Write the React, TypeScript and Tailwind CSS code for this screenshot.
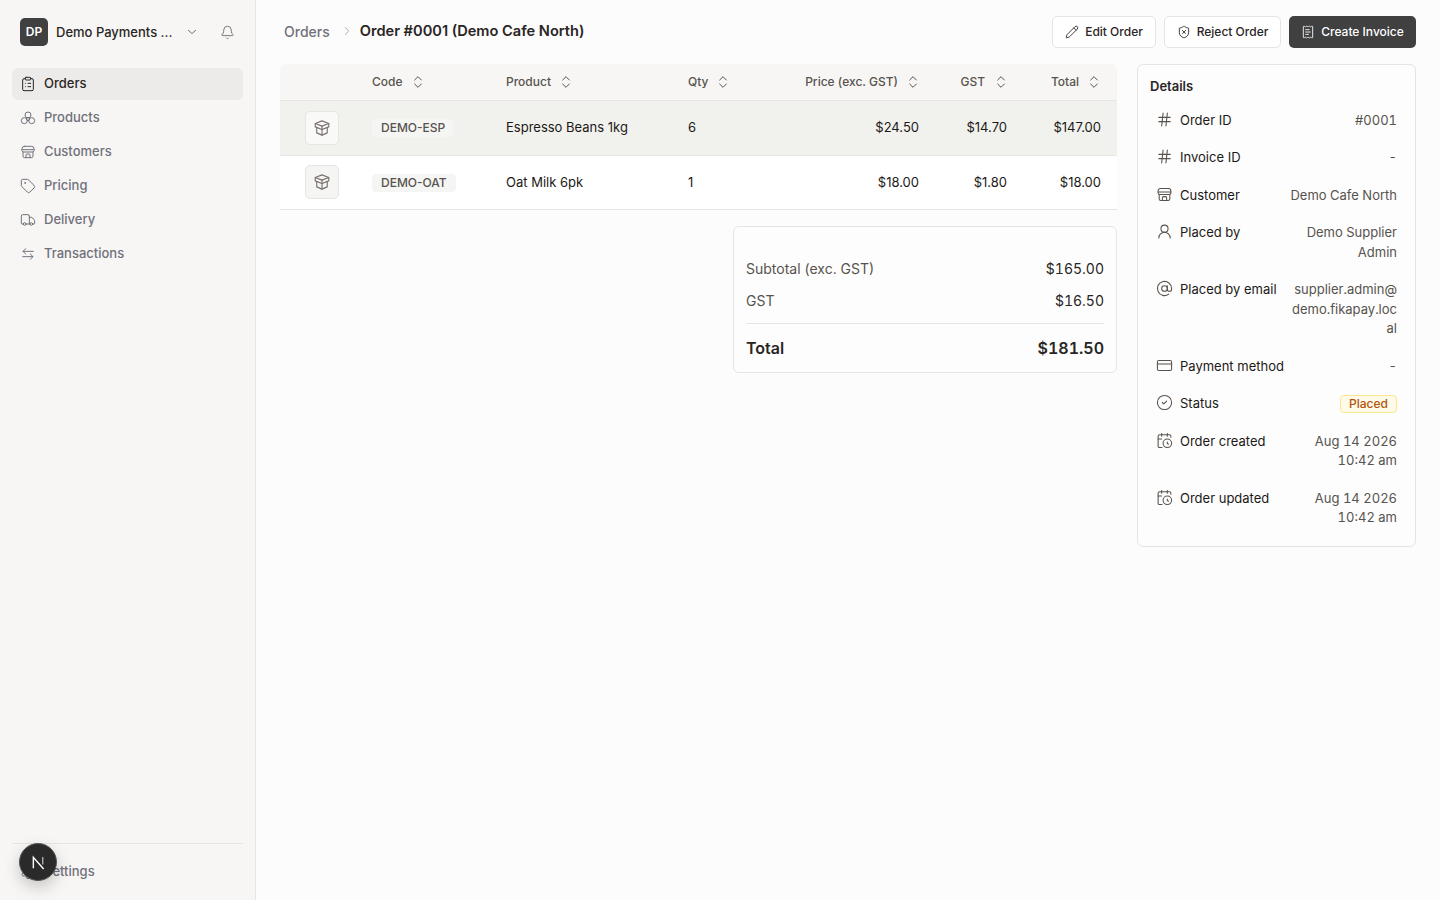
import React from "react";
import { ClipboardList, Tag, Truck, Bell, ChevronDown, ChevronRight, Hash, UserRound, AtSign, CreditCard, CircleCheck, CalendarClock, Pencil, ShieldX, ReceiptText, ChevronsUpDown, Settings } from "lucide-react";

type IconProps = { className?: string; strokeWidth?: number };

function Store({ className, strokeWidth = 1.5 }: IconProps) {
  return (
    <svg viewBox="0 0 24 24" fill="none" stroke="currentColor" strokeWidth={strokeWidth} strokeLinecap="round" strokeLinejoin="round" className={className}>
      <path d="M6.500 3.500h11a3.500 3.500 0 0 1 3.500 3.500v2.500a2.500 2.500 0 0 1-2.500 2.500h-13A2.500 2.500 0 0 1 3 9.500V7a3.500 3.500 0 0 1 3.500-3.500z" />
      <path d="M3 8.500h18" />
      <path d="M4.500 12v6a2.500 2.500 0 0 0 2.500 2.500h10a2.500 2.500 0 0 0 2.500-2.500v-6" />
      <path d="M9 20.500v-4a1.500 1.500 0 0 1 1.500-1.500h3a1.500 1.500 0 0 1 1.500 1.500v4" />
    </svg>
  );
}

function Circles({ className, strokeWidth = 1.5 }: IconProps) {
  return (
    <svg viewBox="0 0 24 24" fill="none" stroke="currentColor" strokeWidth={strokeWidth} className={className}>
      <circle cx="12" cy="7.500" r="4.500" />
      <circle cx="6.500" cy="16" r="4.500" />
      <circle cx="17.500" cy="16" r="4.500" />
      <circle cx="12" cy="13.500" r="2.500" />
    </svg>
  );
}

function BoxIcon({ className, strokeWidth = 1.5 }: IconProps) {
  return (
    <svg viewBox="0 0 24 24" fill="none" stroke="currentColor" strokeWidth={strokeWidth} strokeLinejoin="round" strokeLinecap="round" className={className}>
      <path d="M12 2.500l9 3.500-9 3.500-9-3.500z" />
      <path d="M3 6v4.500l9 3.500 9-3.500V6" />
      <path d="M5 12v6.500l7 3 7-3V12" />
      <path d="M12 14v7.500" />
      <path d="M12 9.500V14" />
    </svg>
  );
}

function Arrows({ className, strokeWidth = 1.5 }: IconProps) {
  return (
    <svg viewBox="0 0 24 24" fill="none" stroke="currentColor" strokeWidth={strokeWidth} strokeLinecap="round" strokeLinejoin="round" className={className}>
      <path d="M20 8H5" />
      <path d="M8.500 4L4.500 8l4 4" />
      <path d="M4 16h15" />
      <path d="M15.500 12l4 4-4 4" />
    </svg>
  );
}

const nav = [
  { label: "Orders", icon: ClipboardList, active: true },
  { label: "Products", icon: Circles },
  { label: "Customers", icon: Store },
  { label: "Pricing", icon: Tag },
  { label: "Delivery", icon: Truck },
  { label: "Transactions", icon: Arrows },
];

const grid = "grid grid-cols-[80px_134px_182px_114px_145px_88px_94px] items-center";

function Head({ label, cls }: { label: string; cls: string }) {
  return (
    <div className={`flex items-center ${cls}`}>
      <span>{label}</span>
      <ChevronsUpDown className="w-[16px] h-[16px] text-[#57534e]" strokeWidth={1.5} />
    </div>
  );
}

function Row({ code, name, qty, price, gst, total, hl }: { code: string; name: string; qty: string; price: string; gst: string; total: string; hl?: boolean }) {
  return (
    <div className={`${grid} border-b border-[#e7e5e4] text-[13px] text-[#1c1917] ${hl ? "h-[55px] bg-[#f1f1ee]" : "h-[54px] bg-white"}`}>
      <div className="flex justify-center pl-[4px]">
        <div className={`w-[34px] h-[34px] rounded-[5px] border border-[#e7e5e4] flex items-center justify-center ${hl ? "bg-[#f9f9f8]" : "bg-[#f5f5f4] -mt-[1px]"}`}>
          <BoxIcon className="w-[18px] h-[18px] text-[#78716c]" strokeWidth={1.5} />
        </div>
      </div>
      <div className="pl-[12px]">
        <span className="inline-block rounded-[4px] px-[9px] h-[18px] leading-[18px] text-[12px] font-medium text-[#57534e] bg-[#f5f5f4]">{code}</span>
      </div>
      <div className="pl-[12px]">{name}</div>
      <div className="pl-[12px]">{qty}</div>
      <div className="text-right pr-[16px]">{price}</div>
      <div className="text-right pr-[16px]">{gst}</div>
      <div className="text-right pr-[16px]">{total}</div>
    </div>
  );
}

function Detail({ icon: Icon, label, children }: { icon: React.ComponentType<IconProps>; label: string; children: React.ReactNode }) {
  return (
    <div className="flex justify-between gap-[8px] text-[13px] leading-[19.5px]">
      <div className="flex gap-[7px] shrink-0 pl-[6px] text-[#1c1917]">
        <Icon className="w-[17px] h-[17px] text-[#57534e]" strokeWidth={1.5} />
        <span>{label}</span>
      </div>
      <div className="text-right text-[#57534e] break-all tabular-nums">{children}</div>
    </div>
  );
}

export default function App() {
  return (
    <div className="relative flex h-[900px] w-[1440px] overflow-hidden bg-[#fcfcfc] font-['Inter',sans-serif] text-[#1c1917]">
      <aside className="w-[256px] shrink-0 h-full bg-[#f7f6f5] border-r border-[#e7e5e4] flex flex-col">
        <div className="flex items-center h-[64px] pl-[20px] pr-[20px]">
          <div className="w-[28px] h-[28px] rounded-[5px] bg-[#404040] text-white text-[12px] font-semibold flex items-center justify-center">DP</div>
          <span className="ml-[8px] text-[13px] font-medium text-[#292524] w-[122px] whitespace-nowrap mt-[1px]">Demo Payments ...</span>
          <ChevronDown className="ml-[7px] w-[14px] h-[14px] text-[#57534e]" strokeWidth={1.5} />
          <Bell className="ml-[21px] w-[15px] h-[15px] text-[#78716c]" strokeWidth={1.5} />
        </div>
        <nav className="flex flex-col gap-[2px] px-[12px] mt-[4px]">
          {nav.map((n) => (
            <div key={n.label} className={`flex items-center gap-[8px] h-[32px] pl-[8px] rounded-[6px] text-[13px] font-medium ${n.active ? "bg-[#ecebe9] text-[#292524]" : "text-[#71717a]"}`}>
              <n.icon className="w-[16px] h-[16px]" strokeWidth={1.5} />
              <span>{n.label}</span>
            </div>
          ))}
        </nav>
        <div className="mt-auto mx-[12px] border-t border-[#e7e5e4] h-[57px] flex items-center pl-[8px] gap-[8px] text-[13px] font-medium text-[#71717a]">
          <Settings className="w-[16px] h-[16px]" strokeWidth={1.5} />
          <span>Settings</span>
        </div>
      </aside>

      <main className="flex-1 min-w-0 pl-[24px] pr-[24px]">
        <header className="h-[64px] flex items-center justify-between">
          <div className="flex items-center pl-[4px] text-[14px] -mt-[1px]">
            <span className="text-[#71717a] font-medium">Orders</span>
            <ChevronRight className="w-[14px] h-[14px] text-[#a8a29e] ml-[10px] mr-[6px]" strokeWidth={1.5} />
            <span className="text-[14.6px] font-semibold text-[#292524] mt-[1px]">Order #0001 (Demo Cafe North)</span>
          </div>
          <div className="flex items-center gap-[8px] text-[12px] font-medium">
            <button className="h-[32px] w-[104px] rounded-[5px] border border-[#e7e5e4] bg-white flex items-center justify-center gap-[6px] text-[#292524]">
              <Pencil className="w-[14px] h-[14px]" strokeWidth={1.5} />Edit Order
            </button>
            <button className="h-[32px] w-[117px] rounded-[5px] border border-[#e7e5e4] bg-white flex items-center justify-center gap-[6px] text-[#292524]">
              <ShieldX className="w-[14px] h-[14px]" strokeWidth={1.5} />Reject Order
            </button>
            <button className="h-[32px] w-[127px] rounded-[5px] bg-[#404040] flex items-center justify-center gap-[6px] text-white">
              <ReceiptText className="w-[14px] h-[14px]" strokeWidth={1.5} />Create Invoice
            </button>
          </div>
        </header>

        <div className="flex gap-[20px] items-start">
          <div className="w-[837px] shrink-0">
            <div className="rounded-t-[6px] overflow-hidden">
              <div className={`${grid} h-[37px] bg-[#f7f6f5] border-b border-[#e7e5e4] text-[12px] font-medium text-[#57534e]`}>
                <div />
                <Head label="Code" cls="gap-[7px] pl-[12px]" />
                <Head label="Product" cls="gap-[7px] pl-[12px]" />
                <Head label="Qty" cls="gap-[7px] pl-[12px]" />
                <Head label="Price (exc. GST)" cls="gap-[7px] justify-end pr-[14px]" />
                <Head label="GST" cls="gap-[8px] justify-end pr-[14px]" />
                <Head label="Total" cls="gap-[7px] justify-end pr-[15px]" />
              </div>
              <Row hl code="DEMO-ESP" name="Espresso Beans 1kg" qty="6" price="$24.50" gst="$14.70" total="$147.00" />
              <Row code="DEMO-OAT" name="Oat Milk 6pk" qty="1" price="$18.00" gst="$1.80" total="$18.00" />
            </div>
            <div className="flex justify-end mt-[16px]">
              <div className="w-[384px] h-[147px] rounded-[6px] border border-[#e7e5e4] bg-[#fdfdfd] px-[12px] pt-[31px] text-[14px]">
                <div className="flex justify-between h-[20px] items-center text-[#57534e]">
                  <span>Subtotal (exc. GST)</span>
                  <span className="text-[#292524] tabular-nums">$165.00</span>
                </div>
                <div className="flex justify-between h-[20px] items-center mt-[12px] text-[#57534e]">
                  <span>GST</span>
                  <span className="text-[#292524] tabular-nums">$16.50</span>
                </div>
                <div className="border-t border-[#e7e5e4] mt-[13px] pt-[12px] flex justify-between items-center text-[16px] font-semibold text-[#292524]">
                  <span>Total</span>
                  <span className="tabular-nums">$181.50</span>
                </div>
              </div>
            </div>
          </div>

          <div className="w-[279px] h-[483px] rounded-[6px] border border-[#e7e5e4] bg-[#fdfdfd] pl-[12px] pr-[18px] pt-[12px]">
            <div className="text-[13px] font-semibold text-[#292524] h-[19px] leading-[19px]">Details</div>
            <div className="flex flex-col gap-[18px] mt-[14.5px]">
              <Detail icon={Hash} label="Order ID">#0001</Detail>
              <Detail icon={Hash} label="Invoice ID">-</Detail>
              <Detail icon={Store} label="Customer">Demo Cafe North</Detail>
              <Detail icon={UserRound} label="Placed by"><span className="inline-block w-[100px] break-normal">Demo Supplier Admin</span></Detail>
              <Detail icon={AtSign} label="Placed by email"><span className="inline-block w-[108px]">supplier.admin@demo.fikapay.local</span></Detail>
              <Detail icon={CreditCard} label="Payment method">-</Detail>
              <Detail icon={CircleCheck} label="Status">
                <span className="inline-flex items-center h-[18px] px-[8px] rounded-[4px] border border-[#fde68a] bg-[#fffbeb] text-[12px] font-medium text-[#b45309]">Placed</span>
              </Detail>
              <Detail icon={CalendarClock} label="Order created">Aug 14 2026<br />10:42 am</Detail>
              <Detail icon={CalendarClock} label="Order updated">Aug 14 2026<br />10:42 am</Detail>
            </div>
          </div>
        </div>
      </main>

      <div className="absolute left-[19px] top-[843px] w-[38px] h-[38px] rounded-full bg-[#2a2a2a] border border-[#555] shadow-[0_6px_16px_rgba(0,0,0,0.2)] flex items-center justify-center">
        <svg viewBox="0 0 16 16" className="w-[15px] h-[15px]" fill="none" stroke="white" strokeWidth={1.500}>
          <path d="M2.500 14V2.500L13.500 15" />
          <path d="M12.500 2v8" strokeOpacity={0.6} />
        </svg>
      </div>
    </div>
  );
}
